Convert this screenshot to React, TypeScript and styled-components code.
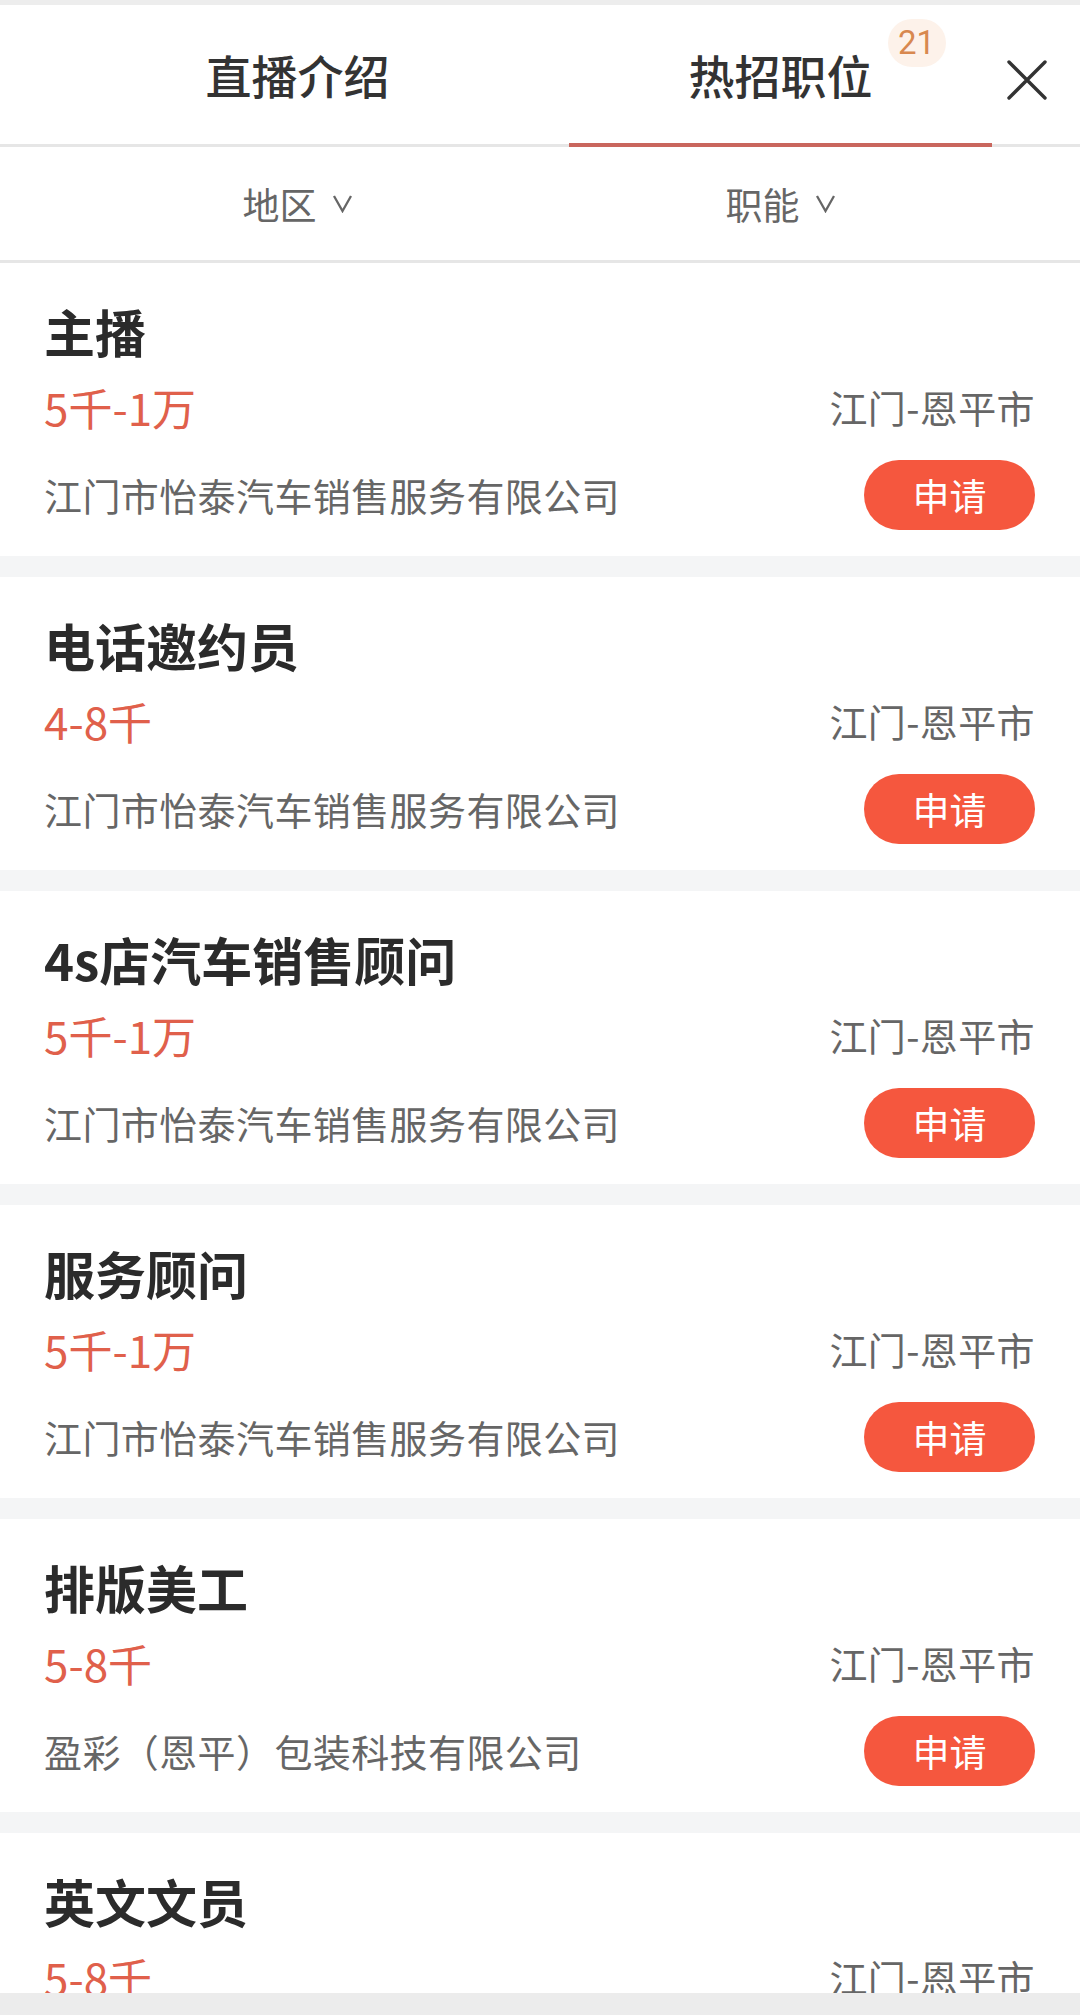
import styled, { createGlobalStyle } from "styled-components";

const GlobalStyle = createGlobalStyle`
  html, body {
    margin: 0;
    padding: 0;
    background: #ffffff;
  }
  body {
    font-family: "Noto Sans CJK SC", "Noto Sans", sans-serif;
  }
`;

const Page = styled.div`
  height: 2015px;
  display: flex;
  flex-direction: column;
  overflow: hidden;
  background: #f4f5f6;
`;

const TopStrip = styled.div`
  height: 5px;
  flex: none;
  background: #ededed;
`;

const TabBar = styled.div`
  position: relative;
  flex: none;
  height: 139px;
  padding: 0 58px 0 56px;
  display: grid;
  grid-template-columns: 1fr 1fr;
  background: #fff;
  border-bottom: 3px solid #e6e6e6;
`;

const Tab = styled.div<{ $active?: boolean }>`
  position: relative;
  display: flex;
  align-items: center;
  justify-content: center;
  padding-bottom: 2px;
  font-size: 46px;
  font-weight: 500;
  color: #333;
  &::after {
    content: "";
    display: ${(p) => (p.$active ? "block" : "none")};
    position: absolute;
    left: 30px;
    right: 30px;
    bottom: -3px;
    height: 4px;
    background: #c9665d;
  }
`;

const TabLabel = styled.span`
  position: relative;
`;

const Badge = styled.span`
  position: absolute;
  left: calc(100% + 15px);
  top: -22px;
  width: 58px;
  height: 48px;
  border-radius: 24px;
  background: #fdf2ea;
  color: #d8884f;
  font-family: Roboto, "Noto Sans", sans-serif;
  font-size: 33px;
  font-weight: 400;
  display: flex;
  align-items: center;
  justify-content: center;
`;

const CloseButton = styled.div`
  position: absolute;
  right: 31px;
  top: 53px;
  width: 44px;
  height: 44px;
  display: flex;
  align-items: center;
  justify-content: center;
`;

const FilterBar = styled.div`
  flex: none;
  height: 113px;
  padding: 0 58px 0 56px;
  display: grid;
  grid-template-columns: 1fr 1fr;
  background: #fff;
  border-bottom: 3px solid #e6e6e6;
`;

const Filter = styled.div`
  display: flex;
  align-items: center;
  justify-content: center;
  gap: 15px;
  font-size: 37px;
  color: #666;
`;

const List = styled.div`
  flex: 1;
  min-height: 0;
  overflow: hidden;
  display: flex;
  flex-direction: column;
  gap: 21px;
`;

const Card = styled.div`
  flex: none;
  height: 293px;
  box-sizing: border-box;
  padding: 32px 45px 0 44px;
  background: #fff;
  display: flex;
  flex-direction: column;
`;

const Title = styled.div`
  height: 72px;
  line-height: 72px;
  font-size: 51px;
  font-weight: 700;
  color: #2b2b2b;
  white-space: nowrap;
`;

const Row = styled.div<{ $top: number; $h: number }>`
  margin-top: ${(p) => p.$top}px;
  height: ${(p) => p.$h}px;
  display: flex;
  align-items: center;
  justify-content: space-between;
`;

const Salary = styled.span`
  font-size: 44px;
  color: #e0604b;
  line-height: 1;
`;

const Muted = styled.span`
  font-size: 38px;
  color: #666;
  letter-spacing: 0.4px;
  line-height: 1;
  white-space: nowrap;
`;

const ApplyButton = styled.button`
  width: 171px;
  height: 70px;
  border: none;
  border-radius: 35px;
  background: #f5573e;
  color: #fff;
  font-family: "Noto Sans CJK SC", sans-serif;
  font-size: 37px;
  padding: 0;
  display: flex;
  align-items: center;
  justify-content: center;
`;

const BottomBar = styled.div`
  flex: none;
  height: 22px;
  background: #ececec;
`;

const jobs = [
  { title: "主播", salary: "5千-1万", company: "江门市怡泰汽车销售服务有限公司" },
  { title: "电话邀约员", salary: "4-8千", company: "江门市怡泰汽车销售服务有限公司" },
  { title: "4s店汽车销售顾问", salary: "5千-1万", company: "江门市怡泰汽车销售服务有限公司" },
  { title: "服务顾问", salary: "5千-1万", company: "江门市怡泰汽车销售服务有限公司" },
  { title: "排版美工", salary: "5-8千", company: "盈彩（恩平）包装科技有限公司" },
  { title: "英文文员", salary: "5-8千", company: "盈彩（恩平）包装科技有限公司" },
];

function Caret() {
  return (
    <svg width="21" height="19" viewBox="0 0 21 19">
      <polyline points="2,2 10.5,17 19,2" fill="none" stroke="#666" strokeWidth="2.3" />
    </svg>
  );
}

export default function App() {
  return (
    <>
      <GlobalStyle />
      <Page>
        <TopStrip />
        <TabBar>
          <Tab>
            <TabLabel>直播介绍</TabLabel>
          </Tab>
          <Tab $active>
            <TabLabel>
              热招职位
              <Badge>21</Badge>
            </TabLabel>
          </Tab>
          <CloseButton>
            <svg width="42" height="42" viewBox="0 0 42 42">
              <path d="M3 3 L39 39 M39 3 L3 39" stroke="#333" strokeWidth="3.4" strokeLinecap="round" />
            </svg>
          </CloseButton>
        </TabBar>
        <FilterBar>
          <Filter>
            地区 <Caret />
          </Filter>
          <Filter>
            职能 <Caret />
          </Filter>
        </FilterBar>
        <List>
          {jobs.map((job, i) => (
            <Card key={i}>
              <Title>{job.title}</Title>
              <Row $top={10} $h={60}>
                <Salary>{job.salary}</Salary>
                <Muted>江门-恩平市</Muted>
              </Row>
              <Row $top={23} $h={70}>
                <Muted>{job.company}</Muted>
                <ApplyButton>申请</ApplyButton>
              </Row>
            </Card>
          ))}
        </List>
        <BottomBar />
      </Page>
    </>
  );
}
